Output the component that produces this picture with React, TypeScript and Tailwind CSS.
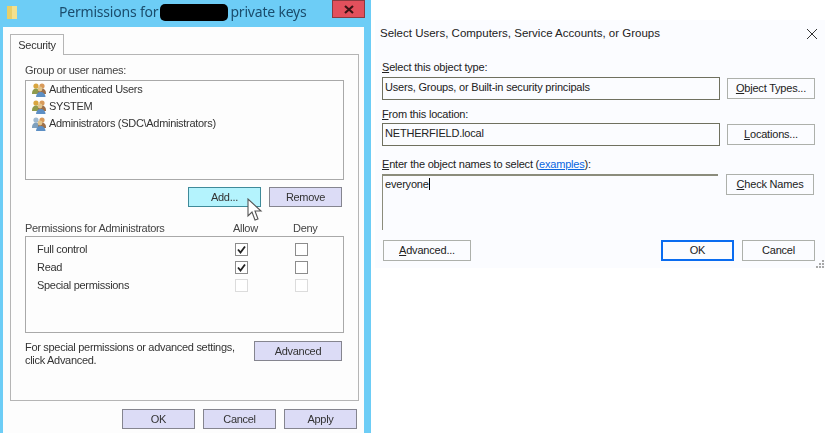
const Users = ({ tone }: { tone: "a" | "b" }) => (
  <svg width="18" height="16" viewBox="0 0 18 16" className="shrink-0">
    <circle cx="5" cy="4" r="2.6" fill={tone === "a" ? "#d9a53f" : "#9fb9cf"} />
    <path d="M1 11c0-3 2-4.5 4-4.5S9 8 9 11v1H1z" fill={tone === "a" ? "#8f9a4c" : "#7fa0bd"} />
    <circle cx="11" cy="4" r="2.6" fill="#d89a5a" />
    <path d="M7 11c0-3 2-4.5 4-4.5s4 1.5 4 4.5v1H7z" fill="#9c6f4a" />
    <circle cx="9" cy="7" r="2.4" fill="#e2c48a" />
    <path d="M5 15c0-3 2-5 4.5-5s5 2 5 5z" fill="#5d8fc4" />
  </svg>
);

const WinBtn = ({ w, children, cls = "border-[#85858f] bg-[#dcdcf6]" }: { w: string; children: React.ReactNode; cls?: string }) => (
  <div className={`${w} h-[20px] shrink-0 flex items-center justify-center text-[11px] text-[#333] border ${cls}`}>
    {children}
  </div>
);

const Check = ({ on, dim }: { on?: boolean; dim?: boolean }) => (
  <div className={`w-[13px] h-[13px] flex items-center justify-center border bg-white ${dim ? "border-[#dcdcdc]" : "border-[#8c8c8c]"}`}>
    {on && (
      <svg width="9" height="9" viewBox="0 0 9 9">
        <path d="M1 4.5 3.5 7.5 8 1.5" fill="none" stroke="#222" strokeWidth="1.8" />
      </svg>
    )}
  </div>
);

const PermRow = ({ label, allow, dim }: { label: string; allow?: boolean; dim?: boolean }) => (
  <div className="h-[18px] flex items-center text-[11px] text-[#333]">
    <span className="w-[209px] pl-[11px]">{label}</span>
    <div className="w-[60px]"><Check on={allow} dim={dim} /></div>
    <Check dim={dim} />
  </div>
);

const DlgBtn = ({ w, children, cls = "border-[#adb0ab]" }: { w: string; children: React.ReactNode; cls?: string }) => (
  <div className={`${w} h-[21px] flex items-center justify-center border text-[11px] text-[#222] bg-[#fbfcff] ${cls}`}>
    {children}
  </div>
);

const Field = ({ children }: { children: React.ReactNode }) => (
  <div className="w-[338px] h-[23px] pl-[2px] pb-[2px] flex items-center border border-[#6f705f] text-[11px] text-[#222]">
    {children}
  </div>
);

export default function App() {
  return (
    <div className="w-[825px] h-[433px] flex overflow-hidden bg-white font-['Liberation_Sans',sans-serif]">
      <div className="w-[371px] h-[433px] shrink-0 flex flex-col pl-[3px] pr-[7px] bg-[#6dcdf6] blur-[0.4px] tracking-[-0.3px]">
        <div className="h-[27px] shrink-0 flex items-start">
          <svg width="12" height="14" viewBox="0 0 12 14" className="mt-[5px] ml-[4px] shrink-0">
            <path d="M0 1h6l2 2v11H0z" fill="#e8cf6a" />
            <path d="M5 1h5v13H5z" fill="#f3e08e" />
          </svg>
          <div className="ml-[40px] mt-[2px] flex items-center font-['Noto_Sans',sans-serif] text-[14px] tracking-[-0.2px] leading-[20px] text-[#1b4d6d]">
            <span>Permissions for</span>
            <span className="mx-[2px] w-[68px] h-[17px] rounded-[5px] bg-black" />
            <span>private keys</span>
          </div>
          <div className="ml-auto mr-[-1px] w-[33px] h-[18px] flex items-center justify-center bg-[#e2505c] border border-[#8a3a40]">
            <svg width="10" height="9" viewBox="0 0 10 9">
              <path d="M1 1 9 8M9 1 1 8" stroke="#3b1214" strokeWidth="2.2" />
            </svg>
          </div>
        </div>
        <div className="flex-1 bg-[#fdfdfd] px-[7px] pt-[7px]">
          <div className="w-[54px] h-[21px] -mb-px relative z-10 bg-[#fdfdfd] border border-b-0 border-[#b5b5b5] flex items-center justify-center text-[11px] text-[#333]">
            Security
          </div>
          <div className="w-[349px] h-[347px] border border-[#b5b5b5] pl-[14px] pt-[7px]">
            <div className="h-[16px] leading-[16px] text-[11px] text-[#444]">Group or user names:</div>
            <div className="mt-[2px] w-[319px] h-[100px] border border-[#a9a9a9] pl-[5px] text-[11px] text-[#333]">
              <div className="h-[17px] flex items-center"><Users tone="a" />Authenticated Users</div>
              <div className="h-[17px] flex items-center"><Users tone="a" />SYSTEM</div>
              <div className="h-[17px] flex items-center"><Users tone="b" />Administrators (SDC\Administrators)</div>
            </div>
            <div className="relative mt-[7px] w-[317px] flex justify-end gap-[8px]">
              <WinBtn w="w-[73px]" cls="bg-[#b4f3fd] border-[#3f8a99]">Add...</WinBtn>
              <WinBtn w="w-[73px]">Remove</WinBtn>
              <svg width="16" height="24" viewBox="0 0 16 24" className="absolute left-[222px] top-[11px]">
                <path d="M1 1v17l4-4 3 8 3-1-3-8h6z" fill="#fff" stroke="#555" strokeWidth="1.1" />
              </svg>
            </div>
            <div className="mt-[13px] h-[16px] flex items-center text-[11px] text-[#444]">
              <span className="w-[208px]">Permissions for Administrators</span>
              <span className="w-[60px]">Allow</span>
              <span>Deny</span>
            </div>
            <div className="w-[319px] h-[97px] border border-[#a9a9a9] pt-[3px]">
              <PermRow label="Full control" allow />
              <PermRow label="Read" allow />
              <PermRow label="Special permissions" dim />
            </div>
            <div className="mt-[8px] w-[317px] flex items-start justify-between">
              <div className="text-[11px] leading-[13px] text-[#333] whitespace-nowrap">
                For special permissions or advanced settings,
                <br />
                click Advanced.
              </div>
              <WinBtn w="w-[88px]">Advanced</WinBtn>
            </div>
          </div>
          <div className="mt-[8px] flex justify-end gap-[8px]">
            <WinBtn w="w-[73px]">OK</WinBtn>
            <WinBtn w="w-[73px]">Cancel</WinBtn>
            <WinBtn w="w-[73px]">Apply</WinBtn>
          </div>
        </div>
      </div>

      <div className="flex-1 pt-[20px] pl-[4px] tracking-[-0.2px]">
        <div className="relative w-[450px] h-[248px] bg-[#fbfcff] pl-[7px]">
          <div className="h-[27px] -ml-[2px] pr-[7px] flex items-center justify-between text-[11.5px] tracking-normal text-[#222]">
            <span>Select Users, Computers, Service Accounts, or Groups</span>
            <svg width="12" height="12" viewBox="0 0 12 12">
              <path d="M1 1 11 11M11 1 1 11" stroke="#333" strokeWidth="1" />
            </svg>
          </div>
          <div className="mt-[12px] h-[16px] leading-[16px] text-[11px] text-[#222]"><u>S</u>elect this object type:</div>
          <div className="mt-[2px] flex items-center gap-[7px]">
            <Field>Users, Groups, or Built-in security principals</Field>
            <DlgBtn w="w-[88px]"><span><u>O</u>bject Types...</span></DlgBtn>
          </div>
          <div className="mt-[6px] h-[16px] leading-[16px] text-[11px] text-[#222]"><u>F</u>rom this location:</div>
          <div className="mt-[1px] flex items-center gap-[7px]">
            <Field>NETHERFIELD.local</Field>
            <DlgBtn w="w-[88px]"><span><u>L</u>ocations...</span></DlgBtn>
          </div>
          <div className="mt-[10px] h-[16px] leading-[16px] text-[11px] text-[#222]">
            <u>E</u>nter the object names to select (<span className="text-[#0a66e0] underline">examples</span>):
          </div>
          <div className="mt-[2px] flex items-start gap-[8px]">
            <div className="w-[336px] h-[56px] pl-[2px] border-t-2 border-l border-[#8b8c7c] text-[11px] leading-[16px] text-[#222]">
              everyone<span className="border-r border-black" />
            </div>
            <DlgBtn w="w-[88px]"><span><u>C</u>heck Names</span></DlgBtn>
          </div>
          <div className="mt-[10px] pl-[1px] flex items-center">
            <DlgBtn w="w-[88px]"><span><u>A</u>dvanced...</span></DlgBtn>
            <DlgBtn w="w-[73px] ml-[190px]" cls="border-2 border-[#0a6cf0]">OK</DlgBtn>
            <DlgBtn w="w-[73px] ml-[8px]">Cancel</DlgBtn>
          </div>
          <svg width="10" height="10" viewBox="0 0 10 10" className="absolute right-0 bottom-[-1px]">
            <g fill="#a8a8a8">
              <rect x="7" y="1" width="2" height="2" />
              <rect x="4" y="4" width="2" height="2" />
              <rect x="7" y="4" width="2" height="2" />
              <rect x="1" y="7" width="2" height="2" />
              <rect x="4" y="7" width="2" height="2" />
              <rect x="7" y="7" width="2" height="2" />
            </g>
          </svg>
        </div>
      </div>
    </div>
  );
}
